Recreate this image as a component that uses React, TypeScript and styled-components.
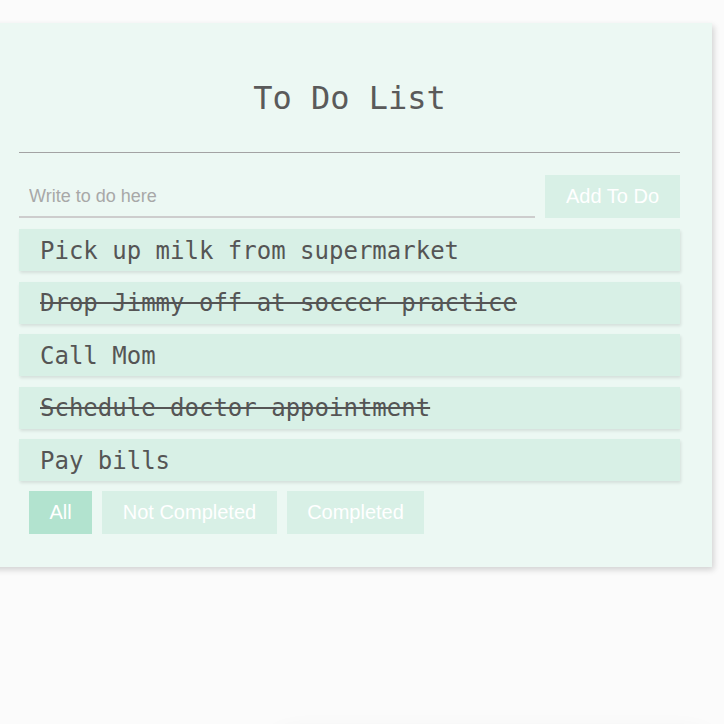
import React, { useState } from "react";
import styled, { createGlobalStyle, css } from "styled-components";

const GlobalStyle = createGlobalStyle`
  html, body {
    margin: 0;
    padding: 0;
    background: #fbfbfb;
    overflow: hidden;
  }
  body {
    font-family: "Liberation Sans", Arial, sans-serif;
  }
  * { box-sizing: border-box; }
`;

const Page = styled.div`
  width: 724px;
  height: 724px;
  padding-top: 23px;
  overflow: hidden;
`;

const Card = styled.div`
  width: 724px;
  margin-left: -12px;
  background: #ecf8f3;
  padding: 57px 32px 33px 31px;
  box-shadow: 2px 3px 6px rgba(0, 0, 0, 0.16);
`;

const Title = styled.h1`
  margin: 0;
  font-family: "DejaVu Sans Mono", monospace;
  font-weight: normal;
  font-size: 32px;
  line-height: 37px;
  color: #5a5a5a;
  text-align: center;
`;

const Divider = styled.hr`
  margin: 35px 0 0;
  border: none;
  border-top: 1px solid #a3a3a3;
  height: 0;
`;

const Form = styled.form`
  display: flex;
  gap: 10px;
  margin-top: 22px;
`;

const Input = styled.input`
  flex: 1;
  height: 43px;
  border: none;
  border-bottom: 2px solid #cdcdcd;
  background: transparent;
  padding: 2px 10px 0;
  font-family: "Liberation Sans", Arial, sans-serif;
  font-size: 18px;
  color: #555;
  outline: none;
  &::placeholder {
    color: #a8a8a8;
  }
`;

const Button = styled.button<{ $active?: boolean }>`
  height: 43px;
  border: none;
  padding: 0 20.5px;
  background: ${(p) => (p.$active ? "#b2e3cf" : "#d8f0e6")};
  color: #ffffff;
  font-family: "Liberation Sans", Arial, sans-serif;
  font-size: 20px;
  cursor: pointer;
`;

const AddButton = styled(Button)`
  width: 135px;
  padding: 0;
`;

const List = styled.ul`
  list-style: none;
  margin: 11px 0 0;
  padding: 0;
  display: flex;
  flex-direction: column;
  gap: 10.5px;
`;

const Item = styled.li<{ $done: boolean }>`
  height: 42px;
  display: flex;
  align-items: center;
  padding: 1px 21px 0;
  background: #d8f0e6;
  box-shadow: 1px 2px 3px rgba(0, 0, 0, 0.1);
  font-family: "DejaVu Sans Mono", monospace;
  font-size: 24px;
  color: #555555;
  cursor: pointer;
  ${(p) =>
    p.$done &&
    css`
      text-decoration: line-through;
    `}
`;

const Filters = styled.div`
  display: flex;
  gap: 10px;
  margin: 10px 0 0 10px;
`;

const Shade = styled.div`
  margin: 172px 0 0 260px;
  height: 80px;
  border-radius: 40px;
  background: #fbfbfb;
  box-shadow: 0 -4px 26px rgba(0, 0, 0, 0.07);
`;

type Todo = { text: string; done: boolean };

const initial: Todo[] = [
  { text: "Pick up milk from supermarket", done: false },
  { text: "Drop Jimmy off at soccer practice", done: true },
  { text: "Call Mom", done: false },
  { text: "Schedule doctor appointment", done: true },
  { text: "Pay bills", done: false },
];

type Filter = "all" | "open" | "done";

export default function App() {
  const [todos, setTodos] = useState<Todo[]>(initial);
  const [value, setValue] = useState("");
  const [filter, setFilter] = useState<Filter>("all");

  const visible = todos.filter((t) =>
    filter === "all" ? true : filter === "done" ? t.done : !t.done
  );

  return (
    <>
      <GlobalStyle />
      <Page>
        <Card>
          <Title>To Do List</Title>
          <Divider />
          <Form
            onSubmit={(e) => {
              e.preventDefault();
              if (!value.trim()) return;
              setTodos([...todos, { text: value.trim(), done: false }]);
              setValue("");
            }}
          >
            <Input
              placeholder="Write to do here"
              value={value}
              onChange={(e) => setValue(e.target.value)}
            />
            <AddButton type="submit">Add To Do</AddButton>
          </Form>
          <List>
            {visible.map((t) => (
              <Item
                key={t.text}
                $done={t.done}
                onClick={() =>
                  setTodos(
                    todos.map((x) => (x === t ? { ...x, done: !x.done } : x))
                  )
                }
              >
                {t.text}
              </Item>
            ))}
          </List>
          <Filters>
            <Button $active={filter === "all"} onClick={() => setFilter("all")}>
              All
            </Button>
            <Button $active={filter === "open"} onClick={() => setFilter("open")}>
              Not Completed
            </Button>
            <Button $active={filter === "done"} onClick={() => setFilter("done")}>
              Completed
            </Button>
          </Filters>
        </Card>
        <Shade />
      </Page>
    </>
  );
}
